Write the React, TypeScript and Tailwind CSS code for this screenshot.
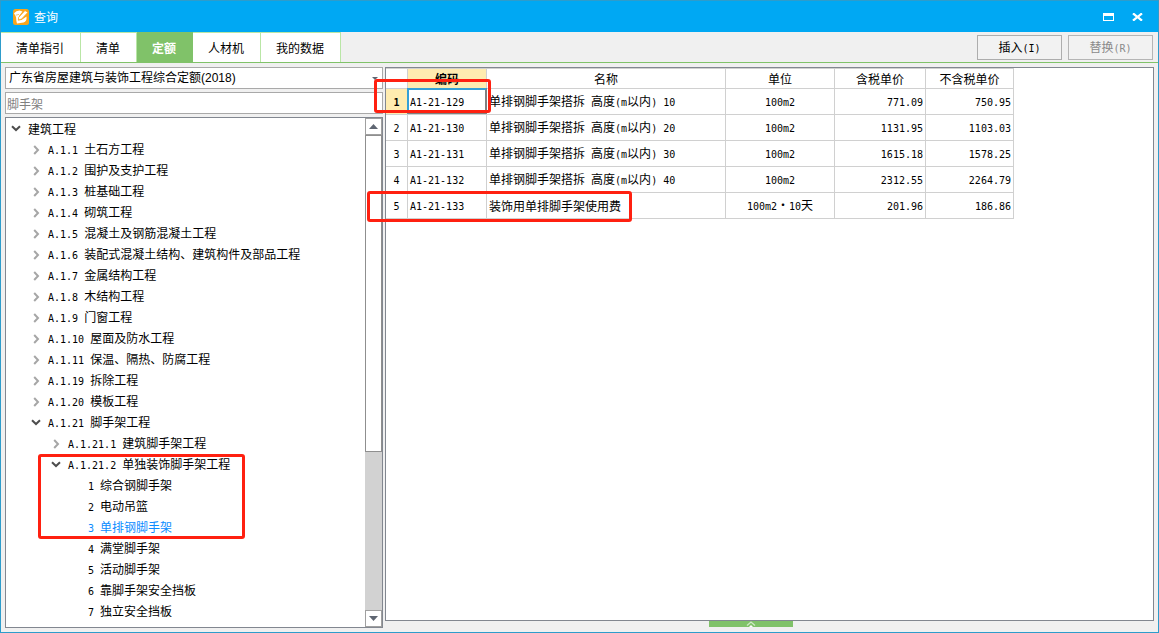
import { Fragment, useState } from "react";

type Node = { depth: 0 | 1 | 2 | 3; open?: boolean; label: string };

const nodes: Node[] = [
  { depth: 0, open: true, label: "建筑工程" },
  { depth: 1, open: false, label: "A.1.1 土石方工程" },
  { depth: 1, open: false, label: "A.1.2 围护及支护工程" },
  { depth: 1, open: false, label: "A.1.3 桩基础工程" },
  { depth: 1, open: false, label: "A.1.4 砌筑工程" },
  { depth: 1, open: false, label: "A.1.5 混凝土及钢筋混凝土工程" },
  { depth: 1, open: false, label: "A.1.6 装配式混凝土结构、建筑构件及部品工程" },
  { depth: 1, open: false, label: "A.1.7 金属结构工程" },
  { depth: 1, open: false, label: "A.1.8 木结构工程" },
  { depth: 1, open: false, label: "A.1.9 门窗工程" },
  { depth: 1, open: false, label: "A.1.10 屋面及防水工程" },
  { depth: 1, open: false, label: "A.1.11 保温、隔热、防腐工程" },
  { depth: 1, open: false, label: "A.1.19 拆除工程" },
  { depth: 1, open: false, label: "A.1.20 模板工程" },
  { depth: 1, open: true, label: "A.1.21 脚手架工程" },
  { depth: 2, open: false, label: "A.1.21.1 建筑脚手架工程" },
  { depth: 2, open: true, label: "A.1.21.2 单独装饰脚手架工程" },
  { depth: 3, label: "1 综合钢脚手架" },
  { depth: 3, label: "2 电动吊篮" },
  { depth: 3, label: "3 单排钢脚手架" },
  { depth: 3, label: "4 满堂脚手架" },
  { depth: 3, label: "5 活动脚手架" },
  { depth: 3, label: "6 靠脚手架安全挡板" },
  { depth: 3, label: "7 独立安全挡板" },
];

const indent = ["pl-1", "pl-6", "pl-11", "pl-16"];

const rows = [
  ["A1-21-129", "单排钢脚手架搭拆 高度(m以内) 10", "100m2", "771.09", "750.95"],
  ["A1-21-130", "单排钢脚手架搭拆 高度(m以内) 20", "100m2", "1131.95", "1103.03"],
  ["A1-21-131", "单排钢脚手架搭拆 高度(m以内) 30", "100m2", "1615.18", "1578.25"],
  ["A1-21-132", "单排钢脚手架搭拆 高度(m以内) 40", "100m2", "2312.55", "2264.79"],
  ["A1-21-133", "装饰用单排脚手架使用费", "100m2・10天", "201.96", "186.86"],
];

/* Half-width characters are set in a monospaced face half as wide as the Chinese glyphs. */
function Mixed({ text }: { text: string }) {
  return (
    <span className="whitespace-pre">
      {text.split(/([\x20-\x7e]+)/).map((part, i) =>
        i % 2 ? (
          <span key={i} className="font-['DejaVu_Sans_Mono',monospace] text-[10px]">
            {part}
          </span>
        ) : (
          <Fragment key={i}>{part}</Fragment>
        ),
      )}
    </span>
  );
}

function Chevron({ open }: { open?: boolean }) {
  if (open === undefined) return null;
  return open ? (
    <svg width="10" height="7" viewBox="0 0 10 7" fill="none" stroke="#4d4d4d" strokeWidth="2">
      <path d="M1 1.2 5 5 9 1.2" />
    </svg>
  ) : (
    <svg width="7" height="10" viewBox="0 0 7 10" fill="none" stroke="#a6a6a6" strokeWidth="2">
      <path d="M1.2 1 5 5 1.2 9" />
    </svg>
  );
}

function Tab({ label, active, onClick }: { label: string; active: boolean; onClick: () => void }) {
  return (
    <button
      type="button"
      role="tab"
      aria-selected={active}
      onClick={onClick}
      className={
        active
          ? "border-r border-t border-[#80c269] bg-[#80c269] pl-[15px] pr-4 font-bold text-white"
          : "border-r border-t border-[#b9e6a6] bg-white pl-[15px] pr-4"
      }
    >
      {label}
    </button>
  );
}

export default function App() {
  const [tab, setTab] = useState("定额");
  const [picked, setPicked] = useState("3 单排钢脚手架");

  return (
    <div className="flex min-h-screen flex-col border border-[#2e9ccb] bg-[#f0f0f0] font-['Noto_Sans_CJK_SC',sans-serif] text-xs text-black">
      <header className="flex h-[31px] shrink-0 items-center bg-[#00a8f3] pl-3 pr-[14px] text-white">
        <svg width="16" height="16" viewBox="0 0 16 16">
          <rect width="16" height="16" rx="2.5" fill="#f9a51a" />
          <path d="M1 4.2Q3 2 6.5 1.6L9.5 2.4 6 7 5 11.5 8.5 11 13.5 7.5Q14 12.5 10.5 13.6L4 14.6Q3.2 12 3 8Z" fill="#fff" />
          <path d="M5.6 8.4 12 1.6 14.8 3.4 8.6 10 5.4 11Z" fill="#fff" stroke="#f9a51a" strokeWidth=".7" />
          <path d="M2.6 6.2 6 5.4" stroke="#f9b850" strokeWidth=".8" />
        </svg>
        <h1 className="ml-[5px] flex-1">查询</h1>
        <button type="button" aria-label="最大化" className="mr-[18px]">
          <svg width="11" height="8" viewBox="0 0 11 8">
            <path d="M0 0H11V8H0ZM1 3V7H10V3Z" fill="#fff" fillRule="evenodd" />
          </svg>
        </button>
        <button type="button" aria-label="关闭" className="mr-px">
          <svg width="11" height="8" viewBox="0 0 11 8" fill="none" stroke="#fff" strokeWidth="2.2">
            <path d="M1 .3 5.5 4 10 .3M1 7.7 5.5 4 10 7.7" />
          </svg>
        </button>
      </header>

      <div className="flex h-[31px] shrink-0 border-b border-[#80c269]">
        <div role="tablist" className="flex flex-1">
          {["清单指引", "清单", "定额", "人材机", "我的数据"].map((t) => (
            <Tab key={t} label={t} active={t === tab} onClick={() => setTab(t)} />
          ))}
        </div>
        <div className="flex items-center gap-[6px] pr-[5px]">
          <button type="button" className="h-[25px] w-[85px] border border-[#adadad] bg-[#f2f2f2]">
            <Mixed text="插入(I)" />
          </button>
          <button type="button" disabled className="h-[25px] w-[85px] border border-[#b5b5b5] bg-[#f2f2f2] text-[#8a8a8a]">
            <Mixed text="替换(R)" />
          </button>
        </div>
      </div>

      <main className="relative flex flex-1 gap-[2px] px-1 pt-1">
        <section className="flex w-[378px] shrink-0 flex-col gap-[3px] pb-1">
          <div className="relative">
            <select
              aria-label="定额库"
              className="block h-[22px] w-full appearance-none border border-[#a9a9a9] bg-white pl-[3px] font-['Liberation_Sans','Noto_Sans_CJK_SC',sans-serif]"
            >
              <option>广东省房屋建筑与装饰工程综合定额(2018)</option>
            </select>
            <svg className="pointer-events-none absolute right-[5px] top-[10px]" width="6" height="3" viewBox="0 0 6 3">
              <path d="M0 0H6L3 3Z" fill="#5f6672" />
            </svg>
          </div>
          <input
            aria-label="搜索"
            placeholder="脚手架"
            className="block h-[22px] border border-[#a9a9a9] bg-white pl-px placeholder:text-[#808080]"
          />
          <div className="flex flex-1 border border-[#828790] bg-white">
            <ul className="flex-1">
              {nodes.map((n) => (
                <li key={n.label} className={indent[n.depth]}>
                  <button
                    type="button"
                    onClick={() => setPicked(n.label)}
                    className={
                      n.label === picked
                        ? "flex h-[21px] items-center text-[#0a8cff]"
                        : "flex h-[21px] items-center"
                    }
                  >
                    <span className={n.open === false ? "w-[18px] pl-[3px]" : "w-[18px] pl-px"}>
                      <Chevron open={n.open} />
                    </span>
                    <Mixed text={n.label} />
                  </button>
                </li>
              ))}
            </ul>
            <div className="flex w-[17px] flex-col bg-[#d2d2d2]">
              <button type="button" aria-label="向上滚动" className="flex h-[17px] items-center justify-center border border-[#a0a0a0] bg-white">
                <svg width="9" height="5" viewBox="0 0 9 5">
                  <path d="M0 5H9L4.5 0Z" fill="#5f6672" />
                </svg>
              </button>
              <div className="h-[317px] border border-[#8f8f8f] bg-white" />
              <div className="flex-1" />
              <button type="button" aria-label="向下滚动" className="flex h-[17px] items-center justify-center border border-[#a0a0a0] bg-white">
                <svg width="9" height="5" viewBox="0 0 9 5">
                  <path d="M0 0H9L4.5 5Z" fill="#5f6672" />
                </svg>
              </button>
            </div>
          </div>
        </section>

        <section className="flex min-w-0 flex-1 flex-col pb-[5px]">
          <div className="flex-1 border border-[#828790] bg-white">
            <table className="w-[628px] table-fixed border-separate border-spacing-0 border-t border-[#d0d0d0]">
              <colgroup>
                <col className="w-[22px]" />
                <col className="w-[79px]" />
                <col className="w-[239px]" />
                <col className="w-[109px]" />
                <col className="w-[91px]" />
                <col className="w-[88px]" />
              </colgroup>
              <thead>
                <tr className="h-5">
                  {["", "编码", "名称", "单位", "含税单价", "不含税单价"].map((h, i) => (
                    <th
                      key={i}
                      scope="col"
                      className={
                        i === 1
                          ? "border-b border-r border-[#d0d0d0] bg-[#ffecb0] p-0 font-bold leading-4"
                          : "border-b border-r border-[#d0d0d0] p-0 font-normal leading-4"
                      }
                    >
                      {h}
                    </th>
                  ))}
                </tr>
              </thead>
              <tbody>
                {rows.map((r, i) => (
                  <tr key={r[0]} className="h-[26px]">
                    <th
                      scope="row"
                      className={
                        i === 0
                          ? "border-b border-r border-[#d0d0d0] bg-[#ffecb0] p-0 font-bold"
                          : "border-b border-r border-[#d0d0d0] p-0 font-normal"
                      }
                    >
                      <Mixed text={String(i + 1)} />
                    </th>
                    <td className="relative border-b border-r border-[#d0d0d0] px-[2px] py-0">
                      {i === 0 && (
                        <span className="absolute -left-px -right-px -top-px bottom-0 border-2 border-b-[#808080] border-l-[#35a0d6] border-r-[#808080] border-t-[#35a0d6]" />
                      )}
                      <Mixed text={r[0]} />
                    </td>
                    <td className="border-b border-r border-[#d0d0d0] px-[2px] py-0">
                      <Mixed text={r[1]} />
                    </td>
                    <td className="border-b border-r border-[#d0d0d0] p-0 text-center">
                      <Mixed text={r[2]} />
                    </td>
                    <td className="border-b border-r border-[#d0d0d0] px-[2px] py-0 text-right">
                      <Mixed text={r[3]} />
                    </td>
                    <td className="border-b border-r border-[#d0d0d0] px-[2px] py-0 text-right">
                      <Mixed text={r[4]} />
                    </td>
                  </tr>
                ))}
              </tbody>
            </table>
          </div>
          <button type="button" aria-label="展开" className="ml-[324px] flex h-[6px] w-[84px] justify-center bg-[#80c269]">
            <svg width="10" height="6" viewBox="0 0 10 6" fill="none">
              <path d="M1 4.5 5 1 9 4.5" stroke="#cfe9c5" strokeWidth="1.3" />
              <path d="M3 6 5 4 7 6Z" fill="#fff" />
            </svg>
          </button>
        </section>

        <div className="pointer-events-none absolute left-[373px] top-4 h-[34px] w-[117px] rounded-[3px] border-3 border-[#ff2010]" />
        <div className="pointer-events-none absolute left-[366px] top-32 h-[31px] w-[265px] rounded-[3px] border-3 border-[#ff2010]" />
        <div className="pointer-events-none absolute left-[37px] top-[391px] h-[85px] w-[207px] rounded-[3px] border-3 border-[#ff2010]" />
      </main>
    </div>
  );
}
